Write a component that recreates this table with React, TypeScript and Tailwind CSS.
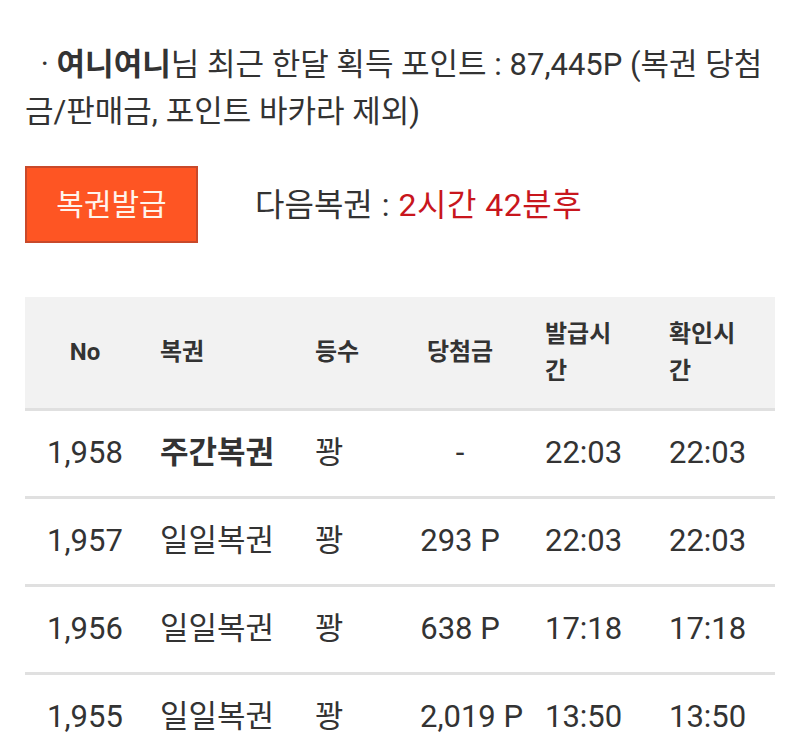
const rows = [
  { no: "1,958", name: "주간복권", bold: true, rank: "꽝", prize: "-", issued: "22:03", checked: "22:03" },
  { no: "1,957", name: "일일복권", bold: false, rank: "꽝", prize: "293 P", issued: "22:03", checked: "22:03" },
  { no: "1,956", name: "일일복권", bold: false, rank: "꽝", prize: "638 P", issued: "17:18", checked: "17:18" },
  { no: "1,955", name: "일일복권", bold: false, rank: "꽝", prize: "2,019 P", issued: "13:50", checked: "13:50" },
];

const cols = "grid grid-cols-[120px_170px_105px_125px_124px_106px] items-center";

export default function App() {
  return (
    <main className="min-h-[750px] bg-white text-[#333] font-['Roboto','Noto_Sans_CJK_KR',sans-serif]">
      <div className="px-[25px] pt-[41px]">

        {/* Points summary */}
        <p className="text-[31px] leading-[47px] break-all">
          {"\u2002·\u00a0"}
          <b className="font-bold">여니여니</b>님 최근 한달 획득 포인트 : 87,445P (복권 당첨금/판매금, 포인트 바카라 제외)
        </p>

        {/* Issue button */}
        <div className="mt-[31px] flex items-center">
          <button className="h-[77px] w-[173px] border-2 border-[#c9492a] bg-[#fe5523] text-[30px] text-[#fff4ec]">
            복권발급
          </button>
          <div className="ml-[57px] text-[32px]">
            다음복권<span className="mx-[9px]">:</span><span className="tracking-[0.5px] text-[#c8161d]">2시간 42분후</span>
          </div>
        </div>

        {/* Ticket table */}
        <div className="mt-[54px] w-[750px]">
          <div className={`${cols} h-[114px] border-b-[3px] border-[#e0e0e0] bg-[#f2f2f2] text-[24px] font-bold leading-[37px]`}>
            <div className="text-center">No</div>
            <div className="pl-[15px]">복권</div>
            <div>등수</div>
            <div className="w-[80px] text-center">당첨금</div>
            <div className="w-[70px]">발급시간</div>
            <div className="w-[70px]">확인시간</div>
          </div>

          {rows.map((r) => (
            <div key={r.no} className={`${cols} h-[88px] border-b-[3px] border-[#e0e0e0] text-[31px]`}>
              <div className="text-center">{r.no}</div>
              <div className={r.bold ? "pl-[15px] font-bold" : "pl-[15px]"}>{r.name}</div>
              <div>{r.rank}</div>
              <div className="w-[80px] whitespace-nowrap text-center">{r.prize}</div>
              <div>{r.issued}</div>
              <div>{r.checked}</div>
            </div>
          ))}
        </div>

      </div>
    </main>
  );
}
